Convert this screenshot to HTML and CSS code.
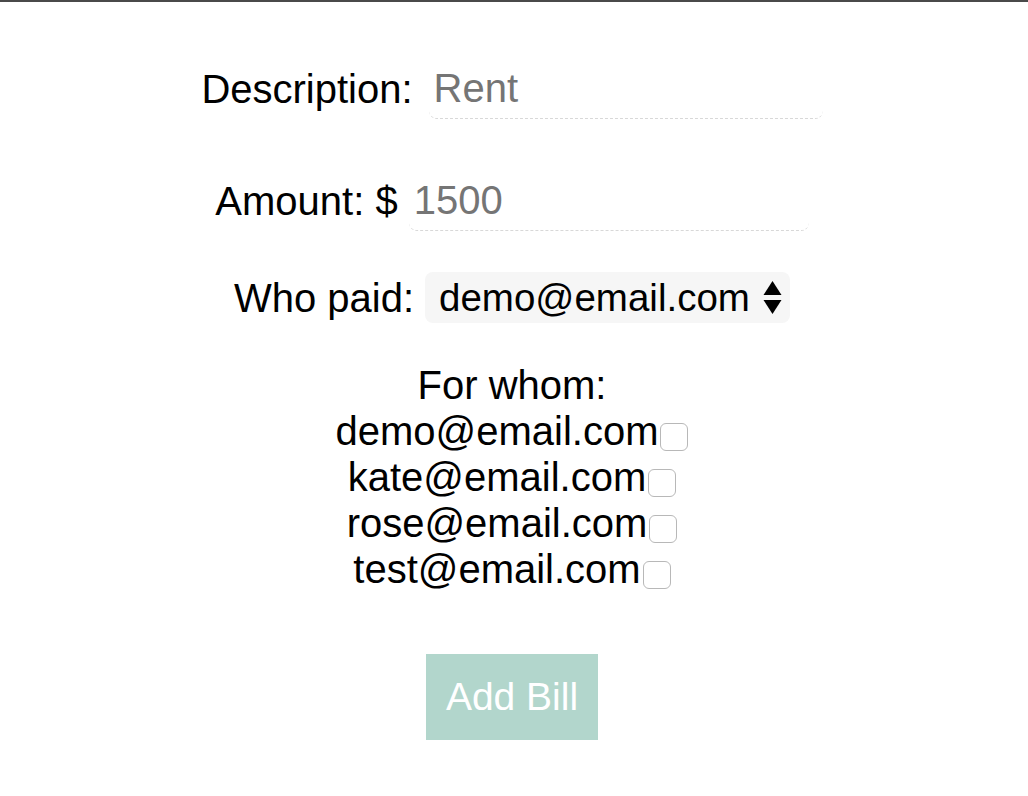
FILE: index.html
```html
<!DOCTYPE html>
<html lang="en">
<head>
<meta charset="utf-8">
<title>Add Bill</title>
<link rel="stylesheet" href="styles.css">
</head>
<body>
<div class="page">
  <form class="bill-form">
    <div class="row row-desc">
      <label class="label" for="desc">Description:</label>
      <input class="text-input desc-input" id="desc" type="text" placeholder="Rent">
    </div>
    <div class="row row-amount">
      <label class="label" for="amount">Amount: $</label>
      <input class="text-input amount-input" id="amount" type="text" placeholder="1500">
    </div>
    <div class="row row-payer">
      <label class="label" for="payer">Who paid:</label>
      <span class="select-wrap">
        <select class="select" id="payer">
          <option>demo@email.com</option>
          <option>kate@email.com</option>
          <option>rose@email.com</option>
          <option>test@email.com</option>
        </select>
        <svg class="arrows" width="19" height="35" viewBox="0 0 19 35"><path d="M9.5 1 L18.5 15 L0.5 15 Z" fill="#000"/><path d="M0.5 20 L18.5 20 L9.5 34 Z" fill="#000"/></svg>
      </span>
    </div>
    <div class="for-whom">
      <div class="for-title">For whom:</div>
      <div class="person">demo@email.com<input class="check" type="checkbox"></div>
      <div class="person">kate@email.com<input class="check" type="checkbox"></div>
      <div class="person">rose@email.com<input class="check" type="checkbox"></div>
      <div class="person">test@email.com<input class="check" type="checkbox"></div>
    </div>
    <button class="add-btn" type="button">Add Bill</button>
  </form>
</div>
</body>
</html>
```

FILE: styles.css
```css
html, body {
  margin: 0;
  padding: 0;
  background: #fff;
}

.page {
  border-top: 2px solid #4a4a4a;
  min-height: 794px;
  font-family: "Liberation Sans", Arial, Helvetica, sans-serif;
  color: #000;
}

.bill-form {
  display: flex;
  flex-direction: column;
  align-items: center;
  padding-top: 56px;
  padding-right: 4px;
}

.row {
  display: flex;
  align-items: center;
  gap: 11px;
}

.row-desc {
  gap: 16px;
}

.label {
  font-size: 40px;
  line-height: 46px;
}

.row-amount {
  margin-top: 51px;
}

.row-payer {
  margin-top: 41px;
}

.text-input {
  font-family: inherit;
  font-size: 40px;
  height: 61px;
  box-sizing: border-box;
  padding: 0 5px;
  border: none;
  border-bottom: 1px dashed #d8d8d8;
  border-radius: 8px;
  outline: none;
  background: transparent;
  color: #000;
}

.desc-input {
  width: 394px;
}

.amount-input {
  width: 400px;
}

.text-input::placeholder {
  color: #757575;
}

.select-wrap {
  position: relative;
  display: inline-block;
}

.select {
  appearance: none;
  -webkit-appearance: none;
  font-family: inherit;
  font-size: 38.5px;
  height: 51px;
  width: 365px;
  box-sizing: border-box;
  padding: 0 40px 0 14px;
  border: none;
  border-radius: 8px;
  background: #f6f6f6;
  color: #000;
  display: block;
}

.arrows {
  position: absolute;
  right: 8px;
  top: 8px;
  pointer-events: none;
}

.for-whom {
  margin-top: 39px;
  display: flex;
  flex-direction: column;
  align-items: center;
  font-size: 40px;
  line-height: 46px;
}

.person {
  white-space: nowrap;
}

.check {
  appearance: none;
  -webkit-appearance: none;
  width: 28px;
  height: 28px;
  box-sizing: border-box;
  margin: 0 0 0 2px;
  border: 1px solid #b8b8b8;
  border-radius: 6px;
  background: #fff;
  vertical-align: -6px;
}

.add-btn {
  margin-top: 62px;
  width: 172px;
  height: 86px;
  border: none;
  background: #b2d6cc;
  color: #fff;
  font-family: inherit;
  font-size: 39px;
  padding: 0;
}
```
